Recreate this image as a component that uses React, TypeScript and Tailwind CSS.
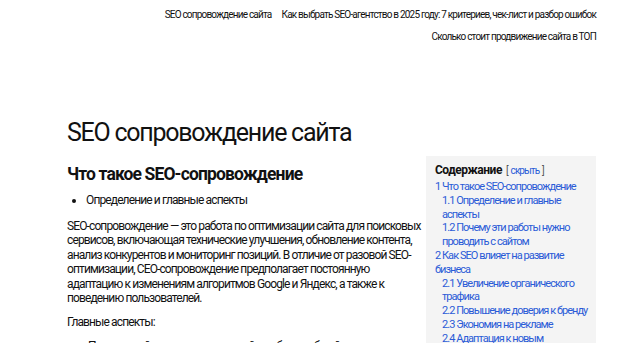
const toc = [
  { n: '1', t: 'Что такое SEO-сопровождение', sub: false },
  { n: '1.1', t: 'Определение и главные аспекты', sub: true },
  { n: '1.2', t: 'Почему эти работы нужно проводить с сайтом', sub: true },
  { n: '2', t: 'Как SEO влияет на развитие бизнеса', sub: false },
  { n: '2.1', t: 'Увеличение органического трафика', sub: true },
  { n: '2.2', t: 'Повышение доверия к бренду', sub: true },
  { n: '2.3', t: 'Экономия на рекламе', sub: true },
  { n: '2.4', t: 'Адаптация к новым алгоритмам', sub: true },
];

export default function App() {
  return (
    <div className="h-[343px] overflow-hidden bg-white text-[#111] tracking-[-0.05em] font-['Roboto','Noto_Sans',sans-serif]">
      {/* меню */}
      <nav className="pt-[9px] pr-[24px] flex flex-col items-end text-[10px] leading-[12px]">
        <div className="flex gap-[10px]">
          <a>SEO сопровождение сайта</a>
          <a>Как выбрать SEO-агентство в 2025 году: 7 критериев, чек-лист и разбор ошибок</a>
        </div>
        <a className="mt-[10px]">Сколько стоит продвижение сайта в ТОП</a>
      </nav>

      <div className="pl-[67px] pr-[24px] pt-[74px]">
        <h1 className="text-[25px] leading-[32px] font-normal tracking-[-0.05em]">SEO сопровождение сайта</h1>

        <div className="flex gap-[4px] mt-[7px]">
          <article className="flex-1 pt-[7px] tracking-[-0.055em]">
            <h2 className="text-[17.5px] leading-[22px] font-bold tracking-[-0.05em]">Что такое SEO-сопровождение</h2>
            <ul className="list-disc pl-[19px] mt-[8px] text-[12px] leading-[14.5px]">
              <li>Определение и главные аспекты</li>
            </ul>
            <p className="mt-[11px] text-[12px] leading-[14.5px]">
              SEO-сопровождение — это работа по оптимизации сайта для поисковых сервисов, включающая технические улучшения, обновление контента, анализ конкурентов и мониторинг позиций. В отличие от разовой SEO-оптимизации, СЕО-сопровождение предполагает постоянную адаптацию к изменениям алгоритмов Google и Яндекс, а также к поведению пользователей.
            </p>
            <p className="mt-[9px] text-[12px] leading-[14.5px]">Главные аспекты:</p>
            <ul className="list-disc pl-[21px] mt-[10px] text-[12px] leading-[14.5px]">
              <li>Постоянный мониторинг позиций и работа с общей видимостью сайта</li>
            </ul>
          </article>

          <aside className="w-[170px] shrink-0 bg-[#f4f4f4] px-[8px] pt-[6px] pb-[10px] self-start tracking-[-0.06em]">
            <div className="flex items-baseline gap-[4px] pl-[1px]">
              <span className="text-[12px] leading-[16px] font-bold tracking-[-0.04em]">Содержание</span>
              <span className="text-[10px] text-[#555] flex gap-[3px]">
                <span>[</span>
                <a className="text-[#2a5bd7]">скрыть</a>
                <span>]</span>
              </span>
            </div>
            <ol className="mt-[2px] text-[11px] leading-[13.8px] text-[#2a5bd7] pl-[1px]">
              {toc.map((item) => (
                <li key={item.n} className={item.sub ? 'pl-[7px]' : ''}>
                  <a>
                    {item.n} {item.t}
                  </a>
                </li>
              ))}
            </ol>
          </aside>
        </div>
      </div>
    </div>
  );
}
